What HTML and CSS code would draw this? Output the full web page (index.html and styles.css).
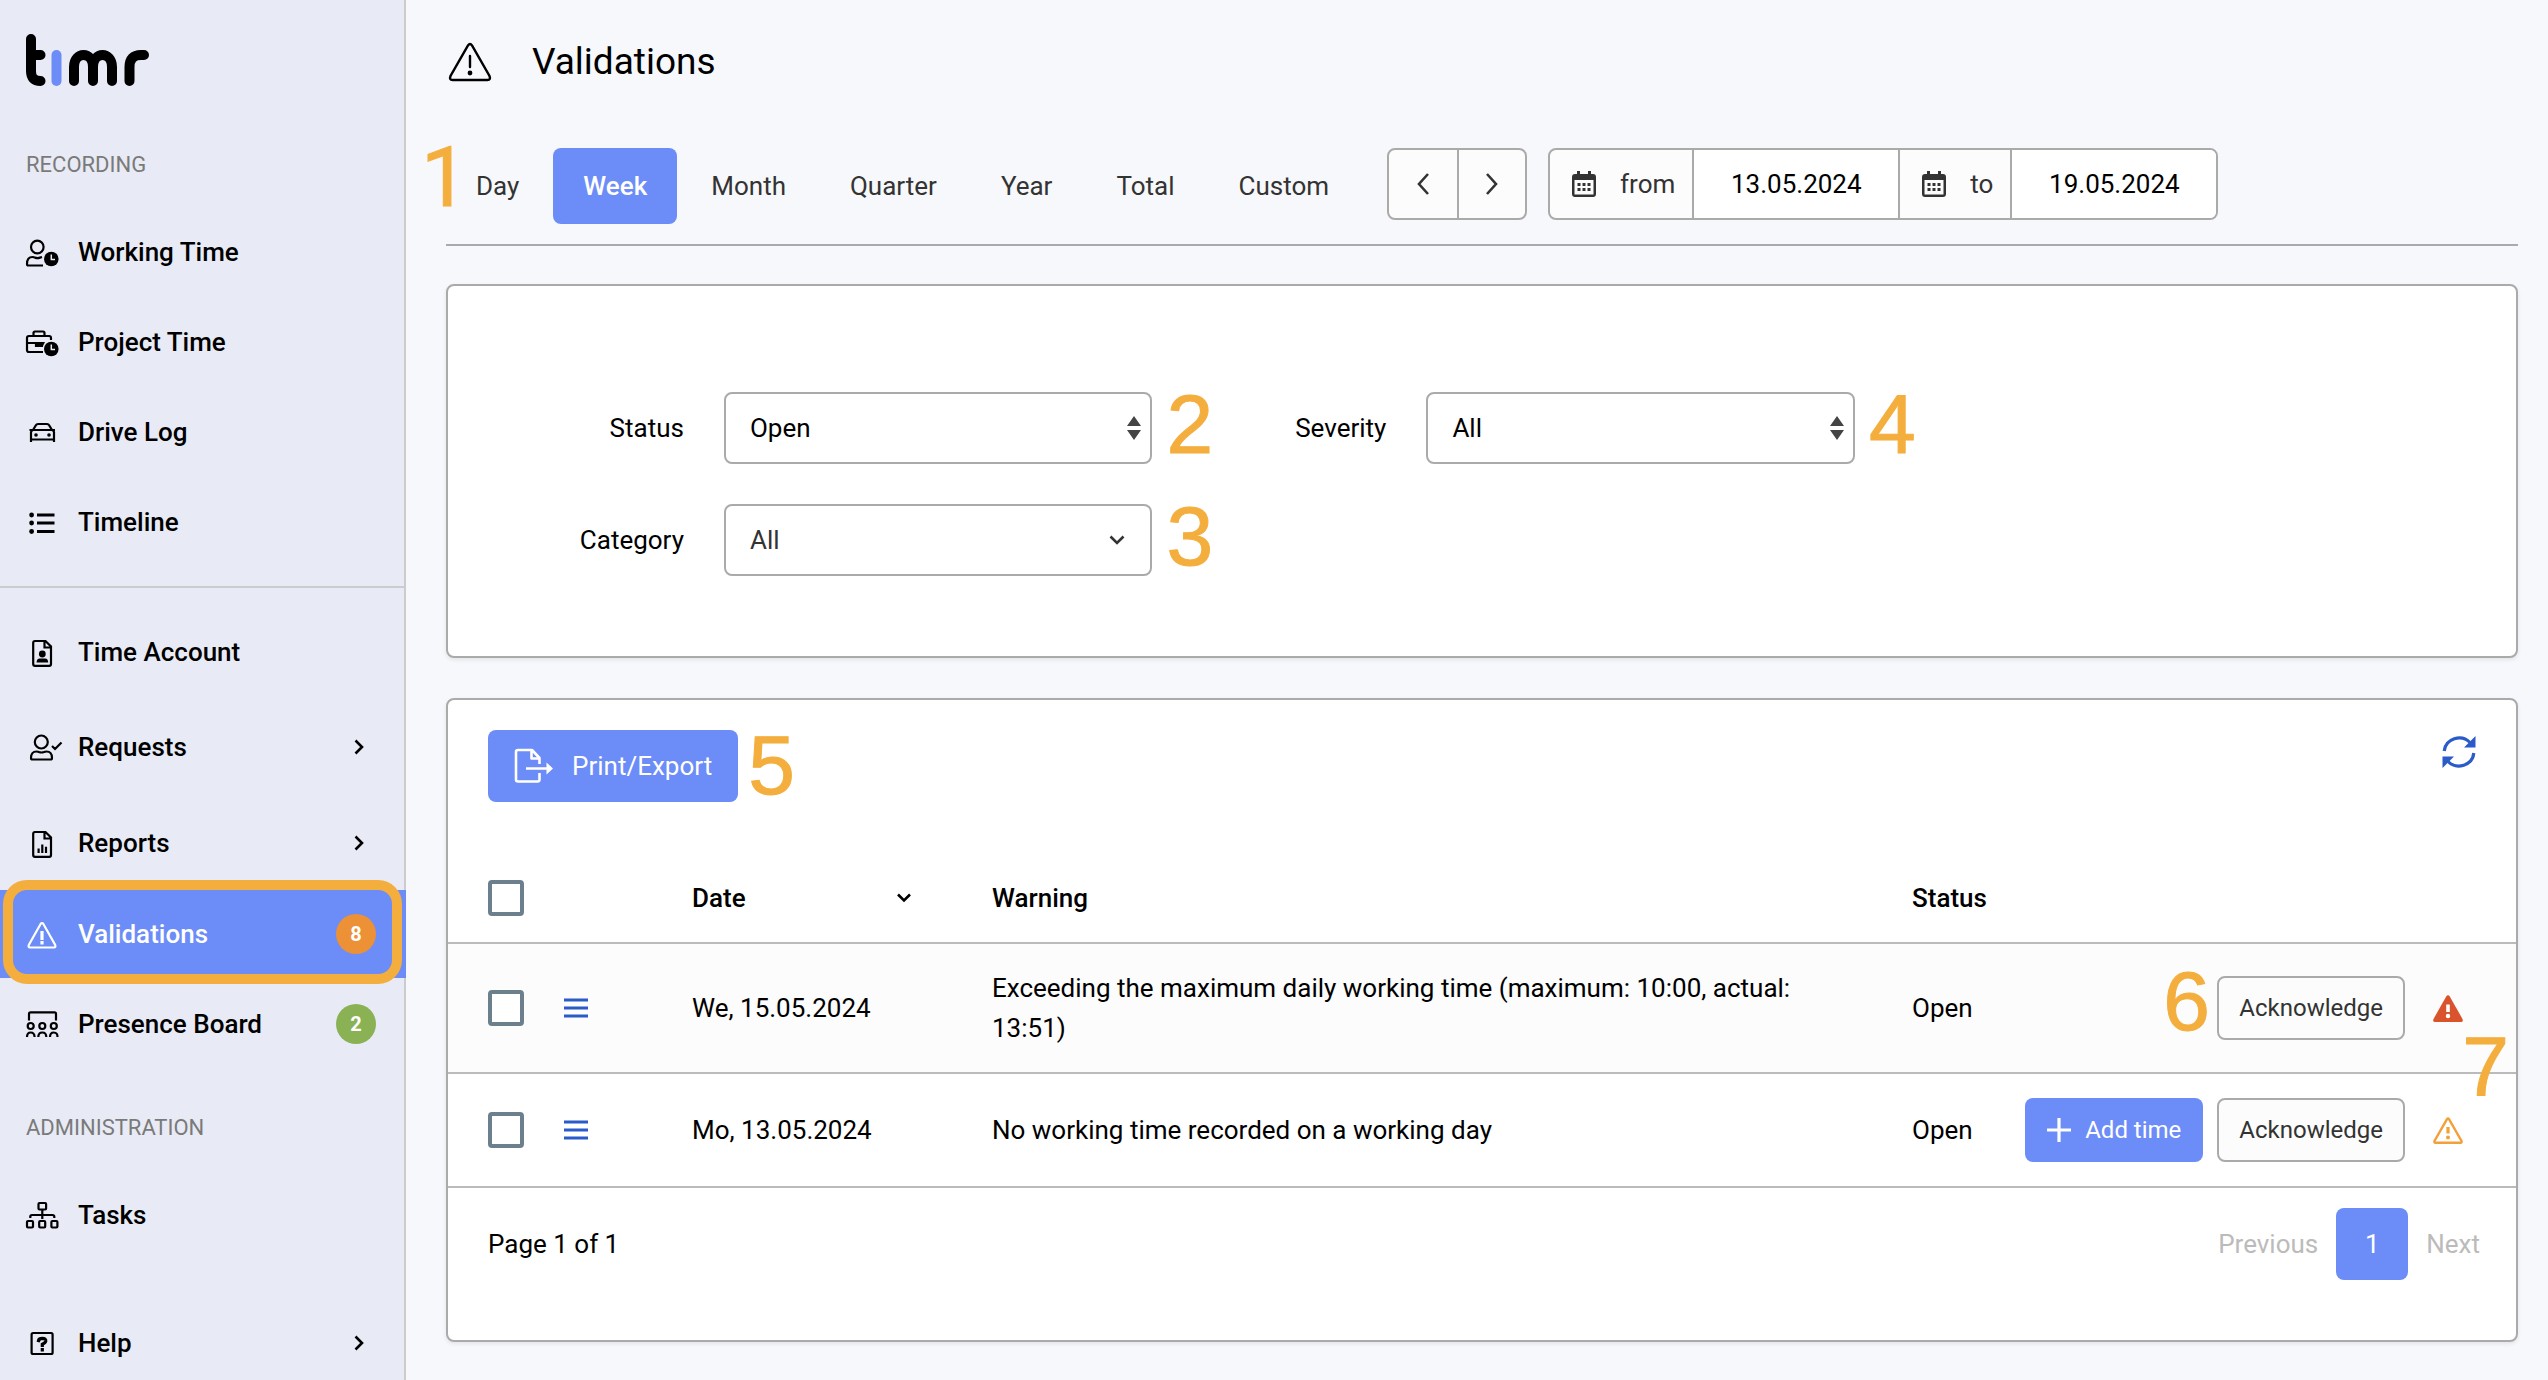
FILE: index.html
```
<!DOCTYPE html>
<html lang="en">
<head>
    <meta charset="UTF-8">
    <meta name="viewport" content="width=device-width, initial-scale=1.0">
    <title>Validations - timr</title>
    <link rel="stylesheet" href="styles.css">
</head>
<body>
    <div class="app">
        <aside class="sidebar">
            <a class="logo" href="#" aria-label="timr">
                <svg width="124" height="52" viewBox="0 0 124 52" fill="none" stroke="#000" stroke-width="10" stroke-linecap="round" stroke-linejoin="round">
                    <path d="M5 5V37Q5 47 14.500 47M5 21H14.500"/>
                    <path stroke="#6c8cf7" d="M30.500 21V47"/>
                    <path d="M48 47V33C48 17 67 17 67 33V47M67 33C67 17 86 17 86 33V47M103.500 47V33Q103.500 21 115 21H118"/>
                </svg>
            </a>

            <h2 class="nav-title">RECORDING</h2>
            <nav class="nav">
                <a class="nav-item" href="#">
                    <svg class="nav-icon" viewBox="0 0 36 36">
                        <circle cx="13.300" cy="13" r="6.300"/>
                        <path d="M19 31.500H4.500Q3 31.500 3 30C3 25.500 5 23 8.500 23Q10 23 11 23.600Q13.500 24.500 16 23.600L18 23"/>
                        <circle class="solid" cx="27.300" cy="25" r="7.300"/>
                        <path class="hands" d="M27.300 20.500V25.500H31"/>
                    </svg>
                    <span>Working Time</span>
                </a>
                <a class="nav-item" href="#">
                    <svg class="nav-icon" viewBox="0 0 36 36">
                        <path d="M19 28H5Q3 28 3 26V14Q3 12 5 12H25Q27 12 27 14V16M9.500 12V9Q9.500 7.500 11 7.500H19Q20.500 7.500 20.500 9V12M3 19H20M12 19V22H19"/>
                        <path class="solid" d="M12 18H21L19 22H13z"/>
                        <circle class="solid" cx="27.300" cy="25" r="7.300"/>
                        <path class="hands" d="M27.300 20.500V25.500H31"/>
                    </svg>
                    <span>Project Time</span>
                </a>
                <a class="nav-item" href="#">
                    <svg class="nav-icon" viewBox="0 0 36 36">
                        <path d="M7 28V18Q7.500 16.500 9 16H28Q29.500 16.500 30 18V28M7 25.500H30M9 16L12 11Q12.500 10 14 10H23Q24.500 10 25 11L28 16M5.500 16H9M28 16H31"/>
                        <circle class="solid" cx="12" cy="21" r="1.800"/>
                        <circle class="solid" cx="25" cy="21" r="1.800"/>
                    </svg>
                    <span>Drive Log</span>
                </a>
                <a class="nav-item" href="#">
                    <svg class="nav-icon" viewBox="0 0 36 36">
                        <path stroke-width="2.800" d="M13 11H30.500M13 19H30.500M13 27.500H30.500"/>
                        <circle class="solid" cx="7.600" cy="11" r="2.400"/>
                        <circle class="solid" cx="7.600" cy="19" r="2.400"/>
                        <circle class="solid" cx="7.600" cy="27.500" r="2.400"/>
                    </svg>
                    <span>Timeline</span>
                </a>
            </nav>

            <hr class="nav-divider">

            <nav class="nav">
                <a class="nav-item" href="#">
                    <svg class="nav-icon" viewBox="0 0 36 36">
                        <path d="M11 7H21.500L27 12.500V30Q27 31.800 25.200 31.800H11Q9.200 31.800 9.200 30V9Q9.200 7 11 7zM20.500 7V13.500H27"/>
                        <circle class="solid" cx="18.300" cy="20" r="3.400"/>
                        <path class="solid" d="M12.500 28.500Q12.800 24.600 15.500 24.600H21.200Q24 24.600 24.200 28.500z"/>
                    </svg>
                    <span>Time Account</span>
                </a>
                <a class="nav-item expandable" href="#">
                    <svg class="nav-icon" viewBox="0 0 36 36">
                        <circle cx="17.300" cy="13" r="6.500"/>
                        <path d="M8.500 30.500H26.500Q28 30.500 28 29C28 25 26 22.500 22.500 22.500Q21 22.500 20 23Q17.300 24 15 23Q14 22.500 12.500 22.500C9 22.500 7 25 7 29Q7 30.500 8.500 30.500zM28 17L31 20L37.500 13.500"/>
                    </svg>
                    <span>Requests</span>
                    <svg class="chevron" width="10" height="16" viewBox="0 0 10 16"><path d="M1.500 1.500L8 8L1.500 14.500"/></svg>
                </a>
                <a class="nav-item expandable" href="#">
                    <svg class="nav-icon" viewBox="0 0 36 36">
                        <path d="M11 7H21.500L27 12.500V30Q27 31.800 25.200 31.800H11Q9.200 31.800 9.200 30V9Q9.200 7 11 7zM20.500 7V13.500H27"/>
                        <path d="M14.600 23.500V28M18.300 19.500V28M22 21.800V28"/>
                    </svg>
                    <span>Reports</span>
                    <svg class="chevron" width="10" height="16" viewBox="0 0 10 16"><path d="M1.500 1.500L8 8L1.500 14.500"/></svg>
                </a>
                <a class="nav-item active" href="#">
                    <svg class="nav-icon" viewBox="0 0 36 36">
                        <path d="M16.600 8Q18 6 19.400 8L31.200 29Q32 31.500 30 31.500H6Q4 31.500 4.800 29z"/>
                        <path class="mark" d="M18 16.500V22.500M18 26.500V27"/>
                    </svg>
                    <span>Validations</span>
                    <span class="badge badge-orange">8</span>
                </a>
                <a class="nav-item" href="#">
                    <svg class="nav-icon" viewBox="0 0 36 36">
                        <path d="M5 14.500V8Q5 6.300 6.500 6.300H30.500Q32 6.300 32 8V14.500"/>
                        <circle cx="6.700" cy="20" r="3"/>
                        <circle cx="18.300" cy="20" r="3"/>
                        <circle cx="29.800" cy="20" r="3"/>
                        <path d="M3 31Q3 26.500 6.700 26.500T10.600 31M14.300 31Q14.300 26.500 18.300 26.500T22.300 31M26 31Q26 26.500 29.800 26.500T33.500 31"/>
                    </svg>
                    <span>Presence Board</span>
                    <span class="badge badge-green">2</span>
                </a>
            </nav>

            <h2 class="nav-title">ADMINISTRATION</h2>
            <nav class="nav">
                <a class="nav-item" href="#">
                    <svg class="nav-icon" viewBox="0 0 36 36">
                        <rect x="14.500" y="6" width="7.600" height="6.500" rx="1"/>
                        <path d="M6.300 21V19.500Q6.300 18 8 18H28.500Q30.300 18 30.300 19.500V21M18.300 12.500V22"/>
                        <rect x="3" y="24" width="6" height="6.500" rx="1"/>
                        <rect x="15.200" y="24" width="6" height="6.500" rx="1"/>
                        <rect x="27.400" y="24" width="6" height="6.500" rx="1"/>
                    </svg>
                    <span>Tasks</span>
                </a>
            </nav>

            <nav class="nav nav-help">
                <a class="nav-item" href="#">
                    <svg class="nav-icon" viewBox="0 0 36 36">
                        <rect x="7.600" y="8" width="21" height="21" rx="1.500"/>
                        <path class="mark" d="M14.500 15.500Q15 13.400 18.300 13.400Q22 13.600 21.800 16Q21.500 17.800 18.300 19.200V20.500M18.300 24.500V25"/>
                    </svg>
                    <span>Help</span>
                    <svg class="chevron" width="10" height="16" viewBox="0 0 10 16"><path d="M1.500 1.500L8 8L1.500 14.500"/></svg>
                </a>
            </nav>
        </aside>

        <main class="main">
            <header class="page-header">
                <svg width="44" height="40" viewBox="0 0 44 40" fill="none" stroke="#000" stroke-width="2.400" stroke-linecap="round">
                    <path d="M20 3.500Q22 .500 24 3.500L41.500 34Q43 38 39.500 38H4.500Q1 38 2.500 34z"/>
                    <path d="M22 14V25"/>
                    <circle cx="22" cy="31" r="1.200" fill="#000"/>
                </svg>
                <h1>Validations</h1>
            </header>

            <div class="toolbar">
                <span class="note note-1">1</span>
                <div class="tabs">
                    <button class="tab">Day</button>
                    <button class="tab active">Week</button>
                    <button class="tab">Month</button>
                    <button class="tab">Quarter</button>
                    <button class="tab">Year</button>
                    <button class="tab">Total</button>
                    <button class="tab">Custom</button>
                </div>
                <div class="group pager">
                    <button aria-label="Previous week"><svg width="14" height="24" viewBox="0 0 14 24"><path d="M12 2L3 12L12 22"/></svg></button>
                    <button aria-label="Next week"><svg width="14" height="24" viewBox="0 0 14 24"><path d="M2 2L11 12L2 22"/></svg></button>
                </div>
                <div class="group range">
                    <label for="from">
                        <svg width="24" height="26" viewBox="0 0 24 26"><path fill="#333" fill-rule="evenodd" d="M5 0H8V3H16V0H19V3H21Q24 3 24 6V23Q24 26 21 26H3Q0 26 0 23V6Q0 3 3 3H5zM2.500 9V23.500H21.500V9zM5.500 12H8.500V15H5.500zM10.500 12H13.500V15H10.500zM15.500 12H18.500V15H15.500zM5.500 17H8.500V20H5.500zM10.500 17H13.500V20H10.500zM15.500 17H18.500V20H15.500z"/></svg>
                        from
                    </label>
                    <input id="from" type="text" value="13.05.2024">
                    <label for="to">
                        <svg width="24" height="26" viewBox="0 0 24 26"><path fill="#333" fill-rule="evenodd" d="M5 0H8V3H16V0H19V3H21Q24 3 24 6V23Q24 26 21 26H3Q0 26 0 23V6Q0 3 3 3H5zM2.500 9V23.500H21.500V9zM5.500 12H8.500V15H5.500zM10.500 12H13.500V15H10.500zM15.500 12H18.500V15H15.500zM5.500 17H8.500V20H5.500zM10.500 17H13.500V20H10.500zM15.500 17H18.500V20H15.500z"/></svg>
                        to
                    </label>
                    <input id="to" type="text" value="19.05.2024">
                </div>
            </div>

            <section class="panel filters">
                <div class="field">
                    <label for="status">Status</label>
                    <div class="select">
                        <select id="status"><option>Open</option><option>All</option></select>
                        <svg class="arrows" width="14" height="24" viewBox="0 0 14 24"><path fill="#444" d="M7 0L14 10H0zM7 24L0 14H14z"/></svg>
                        <span class="note note-field">2</span>
                    </div>
                </div>
                <div class="field">
                    <label for="severity">Severity</label>
                    <div class="select">
                        <select id="severity"><option>All</option></select>
                        <svg class="arrows" width="14" height="24" viewBox="0 0 14 24"><path fill="#444" d="M7 0L14 10H0zM7 24L0 14H14z"/></svg>
                        <span class="note note-field">4</span>
                    </div>
                </div>
                <div class="field">
                    <label for="category">Category</label>
                    <div class="select select-plain">
                        <select id="category"><option>All</option></select>
                        <svg class="caret" width="16" height="10" viewBox="0 0 16 10"><path d="M1.500 1.500L8 8L14.500 1.500"/></svg>
                        <span class="note note-field">3</span>
                    </div>
                </div>
            </section>

            <section class="panel">
                <div class="panel-top">
                    <div class="export">
                        <button class="btn-primary btn-export">
                            <svg width="40" height="36" viewBox="0 0 40 36" fill="none" stroke="#fff" stroke-width="2.600" stroke-linejoin="round">
                                <path d="M25.500 16V10L18 2H4Q2 2 2 4V31.500Q2 33.500 4 33.500H23.500Q25.500 33.500 25.500 31.500V25M17.500 2V10.500H25.500M12 20.500H36"/>
                                <path fill="#fff" stroke="none" d="M32.500 14.500L39 20.500L32.500 26.500z"/>
                            </svg>
                            Print/Export
                        </button>
                        <span class="note note-5">5</span>
                    </div>
                    <button class="refresh" aria-label="Refresh">
                        <svg width="34" height="34" viewBox="0 0 34 34" fill="none" stroke="#2a5bc8" stroke-width="3.200">
                            <path d="M2.200 16A15 14.500 0 0 1 28 7.500M31.800 18A15 14.500 0 0 1 6 26.500"/>
                            <path fill="#2a5bc8" stroke="none" d="M33.500 1V12.500H22zM.500 33V21.500H12z"/>
                        </svg>
                    </button>
                </div>

                <table class="warnings">
                    <colgroup>
                        <col class="col-select">
                        <col class="col-date">
                        <col>
                        <col class="col-status">
                        <col class="col-actions">
                    </colgroup>
                    <thead>
                        <tr>
                            <th><input type="checkbox" aria-label="Select all"></th>
                            <th>
                                <div class="sort">Date <svg width="16" height="10" viewBox="0 0 16 10"><path d="M2 1.500L8 7.500L14 1.500"/></svg></div>
                            </th>
                            <th>Warning</th>
                            <th>Status</th>
                            <th></th>
                        </tr>
                    </thead>
                    <tbody>
                        <tr>
                            <td>
                                <div class="row-tools">
                                    <input type="checkbox" aria-label="Select We, 15.05.2024">
                                    <button aria-label="Row menu"><svg width="24" height="20" viewBox="0 0 24 20"><path d="M0 2H24M0 10H24M0 18H24"/></svg></button>
                                </div>
                            </td>
                            <td>We, 15.05.2024</td>
                            <td>Exceeding the maximum daily working time (maximum: 10:00, actual: 13:51)</td>
                            <td>Open</td>
                            <td>
                                <div class="actions">
                                    <span class="note note-6">6</span>
                                    <button class="btn-outline">Acknowledge</button>
                                    <svg class="severity" width="30" height="27" viewBox="0 0 30 27">
                                        <path fill="#d9532c" d="M13.200 1.500Q15 -1 16.800 1.500L29.500 24Q30.500 27 28 27H2Q-.500 27 .500 24z"/>
                                        <path stroke="#fff" stroke-width="3.600" d="M15 9.500V17"/>
                                        <circle cx="15" cy="21" r="2.200" fill="#fff"/>
                                    </svg>
                                    <span class="note note-7">7</span>
                                </div>
                            </td>
                        </tr>
                        <tr>
                            <td>
                                <div class="row-tools">
                                    <input type="checkbox" aria-label="Select Mo, 13.05.2024">
                                    <button aria-label="Row menu"><svg width="24" height="20" viewBox="0 0 24 20"><path d="M0 2H24M0 10H24M0 18H24"/></svg></button>
                                </div>
                            </td>
                            <td>Mo, 13.05.2024</td>
                            <td>No working time recorded on a working day</td>
                            <td>Open</td>
                            <td>
                                <div class="actions">
                                    <button class="btn-primary btn-add">
                                        <svg width="24" height="24" viewBox="0 0 24 24" stroke="#fff" stroke-width="3.200"><path d="M12 0V24M0 12H24"/></svg>
                                        Add time
                                    </button>
                                    <button class="btn-outline">Acknowledge</button>
                                    <svg class="severity" width="30" height="27" viewBox="0 0 30 27" fill="none" stroke="#f2a03a">
                                        <path stroke-width="2.400" d="M14 2.200Q15 .800 16 2.200L28.500 24Q29 25.800 27.500 25.800H2.500Q1 25.800 1.500 24z"/>
                                        <path stroke-width="3.200" d="M15 10V16.500"/>
                                        <circle cx="15" cy="20.500" r="2" fill="#f2a03a" stroke="none"/>
                                    </svg>
                                </div>
                            </td>
                        </tr>
                    </tbody>
                </table>

                <div class="panel-footer">
                    <span>Page 1 of 1</span>
                    <div class="pages">
                        <button class="page-link" disabled>Previous</button>
                        <button class="page-current">1</button>
                        <button class="page-link" disabled>Next</button>
                    </div>
                </div>
            </section>
        </main>
    </div>
</body>
</html>
```
FILE: styles.css
```
* {
    box-sizing: border-box;
}

body {
    margin: 0;
    background-color: #f7f8fb;
    font-family: Roboto, Arial, sans-serif;
    font-size: 26px;
    line-height: 40px;
    color: #000;
}

button, input, select {
    font: inherit;
    color: inherit;
    margin: 0;
}

button {
    background: none;
    border: none;
    padding: 0;
    white-space: nowrap;
    cursor: pointer;
}

svg {
    display: block;
    flex-shrink: 0;
}

.app {
    display: flex;
    height: 100vh;
    overflow: hidden;
}

/* Sidebar */

.sidebar {
    width: 406px;
    flex-shrink: 0;
    overflow: hidden;
    background-color: #e8ebf5;
    box-shadow: inset -2px 0 #ccc;
}

.logo {
    display: block;
    padding: 34px 26px 19px;
}

.nav-title {
    margin: 0;
    padding: 47px 26px 30px;
    font-size: 22px;
    line-height: 26px;
    font-weight: 400;
    color: #7a7a7a;
}

.nav {
    display: flex;
    flex-direction: column;
}

.nav-item {
    position: relative;
    display: flex;
    align-items: center;
    gap: 18px;
    height: 88px;
    padding: 0 30px 0 24px;
    color: #000;
    font-weight: 500;
    text-decoration: none;
}

.nav-item + .nav-item {
    margin-top: 2px;
}

.nav-item + .nav-item.expandable {
    height: 90px;
    margin-top: 6px;
}

.nav-item.active {
    background-color: #6c8cf7;
    color: #fff;
}

/* Highlight frame around the current page */
.nav-item.active::after {
    content: "";
    position: absolute;
    top: -10px;
    right: 4px;
    bottom: -6px;
    left: 3px;
    border: 10px solid #f4ae3d;
    border-radius: 24px;
    z-index: 1;
}

.nav-icon {
    width: 36px;
    height: 36px;
    overflow: visible;
    fill: none;
    stroke: currentColor;
    stroke-width: 2.2;
}

.nav-icon .solid {
    fill: currentColor;
    stroke: none;
}

.nav-icon .hands {
    stroke: #e8ebf5;
    stroke-width: 1.5;
}

.nav-icon .mark {
    stroke-width: 3.2;
    stroke-linecap: square;
}

.nav-divider {
    margin: 20px 0;
    border: none;
    border-top: 2px solid #ccc;
}

.nav-help {
    margin-top: 40px;
}

.chevron {
    margin-left: auto;
    margin-right: 12px;
    fill: none;
    stroke: #000;
    stroke-width: 2.6;
}

.badge {
    width: 40px;
    height: 40px;
    margin-left: auto;
    border-radius: 50%;
    color: #fff;
    font-size: 20px;
    font-weight: 700;
    text-align: center;
}

.badge-orange {
    background-color: #ec9136;
}

.badge-green {
    background-color: #8ab255;
}

/* Main */

.main {
    flex: 1;
    min-width: 0;
    padding: 36px 30px 36px 40px;
}

.page-header {
    display: flex;
    align-items: center;
    gap: 40px;
    height: 52px;
    padding-left: 2px;
    margin-bottom: 60px;
}

.page-header h1 {
    margin: 0;
    font-size: 37px;
    font-weight: 400;
}

.toolbar {
    position: relative;
    display: flex;
    align-items: flex-start;
    height: 98px;
    margin-bottom: 38px;
    border-bottom: 2px solid #aaa;
}

.tabs {
    display: flex;
    gap: 4px;
    margin-right: 28px;
}

.tab {
    height: 76px;
    padding: 0 30px;
    border-radius: 8px;
    color: #333;
}

.tab.active {
    background-color: #6c8cf7;
    color: #fff;
    font-weight: 500;
}

.group {
    display: flex;
    height: 72px;
    border: 2px solid #aaa;
    border-radius: 8px;
    background-color: #fcfcfc;
    overflow: hidden;
}

.pager {
    margin-right: 21px;
}

.pager button {
    display: flex;
    align-items: center;
    justify-content: center;
    width: 68px;
}

.pager button + button {
    border-left: 2px solid #aaa;
}

.pager svg {
    fill: none;
    stroke: #333;
    stroke-width: 2.6;
}

.range label {
    display: flex;
    align-items: center;
    gap: 24px;
    padding: 0 17px 0 22px;
    color: #333;
}

.range input {
    width: 206px;
    padding: 0;
    border: 0 solid #aaa;
    border-left-width: 2px;
    border-radius: 0;
    background-color: #fff;
    text-align: center;
    outline: none;
}

.range input + label {
    border-left: 2px solid #aaa;
}

.panel {
    border: 2px solid #aaa;
    border-radius: 8px;
    background-color: #fff;
    box-shadow: 0 2px 4px rgba(0, 0, 0, 0.08);
    margin-bottom: 40px;
}

/* Filters */

.filters {
    display: grid;
    grid-template-columns: repeat(2, 34%);
    row-gap: 40px;
    padding: 106px 0 80px 2px;
}

.field {
    display: flex;
    align-items: center;
    gap: 40px;
}

.field label {
    flex: 1;
    text-align: right;
}

.select {
    position: relative;
    width: 61%;
}

.select select {
    display: block;
    width: 100%;
    height: 72px;
    padding: 0 24px;
    border: 2px solid #aaa;
    border-radius: 8px;
    background-color: #fff;
    appearance: none;
}

.select-plain select {
    color: #333;
}

.arrows {
    position: absolute;
    top: 24px;
    right: 11px;
    pointer-events: none;
}

.caret {
    position: absolute;
    top: 31px;
    right: 27px;
    pointer-events: none;
    fill: none;
    stroke: #333;
    stroke-width: 2.6;
}

/* Table panel */

.panel-top {
    display: flex;
    justify-content: space-between;
    align-items: flex-start;
    padding: 30px 40px 52px;
}

.btn-primary, .btn-outline {
    display: flex;
    align-items: center;
    border-radius: 8px;
}

.btn-primary {
    background-color: #6c8cf7;
    color: #fff;
}

.export {
    position: relative;
}

.btn-export {
    gap: 18px;
    height: 72px;
    padding: 0 26px;
}

.refresh {
    margin-top: 5px;
}

.warnings {
    width: 100%;
    table-layout: fixed;
    border-collapse: separate;
    border-spacing: 0;
}

.col-select {
    width: 220px;
}

.col-date {
    width: 300px;
}

.col-status {
    width: 130px;
}

.col-actions {
    width: 498px;
}

.warnings th, .warnings td {
    padding: 24px;
    border-bottom: 2px solid #bbb;
    text-align: left;
    vertical-align: middle;
}

.warnings th {
    font-weight: 500;
}

.warnings th:first-child, .warnings td:first-child {
    padding-left: 40px;
}

.warnings td:last-child {
    padding-left: 0;
    padding-right: 53px;
}

.warnings tbody tr:nth-child(odd) {
    background-color: #fcfcfc;
}

.warnings input {
    display: block;
    width: 36px;
    height: 36px;
    border: 4px solid #6c7f8c;
    border-radius: 4px;
    background-color: #fff;
    appearance: none;
}

.sort {
    display: flex;
    align-items: center;
    justify-content: space-between;
    padding-right: 32px;
}

.sort svg {
    fill: none;
    stroke: #000;
    stroke-width: 2.6;
}

.row-tools {
    display: flex;
    align-items: center;
    gap: 40px;
}

.row-tools svg {
    stroke: #2a5bc8;
    stroke-width: 3;
}

.actions {
    position: relative;
    display: flex;
    align-items: center;
    justify-content: flex-end;
    gap: 14px;
    font-size: 24px;
}

.btn-outline {
    height: 64px;
    padding: 0 20px;
    border: 2px solid #aaa;
    background-color: #fcfcfc;
    color: #333;
}

.btn-add {
    gap: 14px;
    height: 64px;
    padding: 0 22px;
}

.severity {
    margin-left: 14px;
}

.panel-footer {
    display: flex;
    justify-content: space-between;
    align-items: center;
    padding: 20px 36px 60px 40px;
}

.pages {
    display: flex;
    align-items: center;
    gap: 18px;
}

.page-link {
    color: #bbb;
}

.page-current {
    width: 72px;
    height: 72px;
    border-radius: 8px;
    background-color: #6c8cf7;
    color: #fff;
}

/* Callout numbers laid over the page */

.note {
    position: absolute;
    z-index: 2;
    font-family: "Liberation Sans", Arial, sans-serif;
    font-size: 84px;
    line-height: 84px;
    color: #f4ae3d;
    -webkit-text-stroke: 1px #f4ae3d;
    pointer-events: none;
}

.note-1 {
    top: -12px;
    left: -25px;
    font-family: Roboto, Arial, sans-serif;
}

.note-field {
    top: -10px;
    left: calc(100% + 14px);
}

.note-5 {
    top: -7px;
    left: calc(100% + 10px);
}

.note-6 {
    top: -17px;
    right: 253px;
}

.note-7 {
    top: 48px;
    right: -46px;
}
```
